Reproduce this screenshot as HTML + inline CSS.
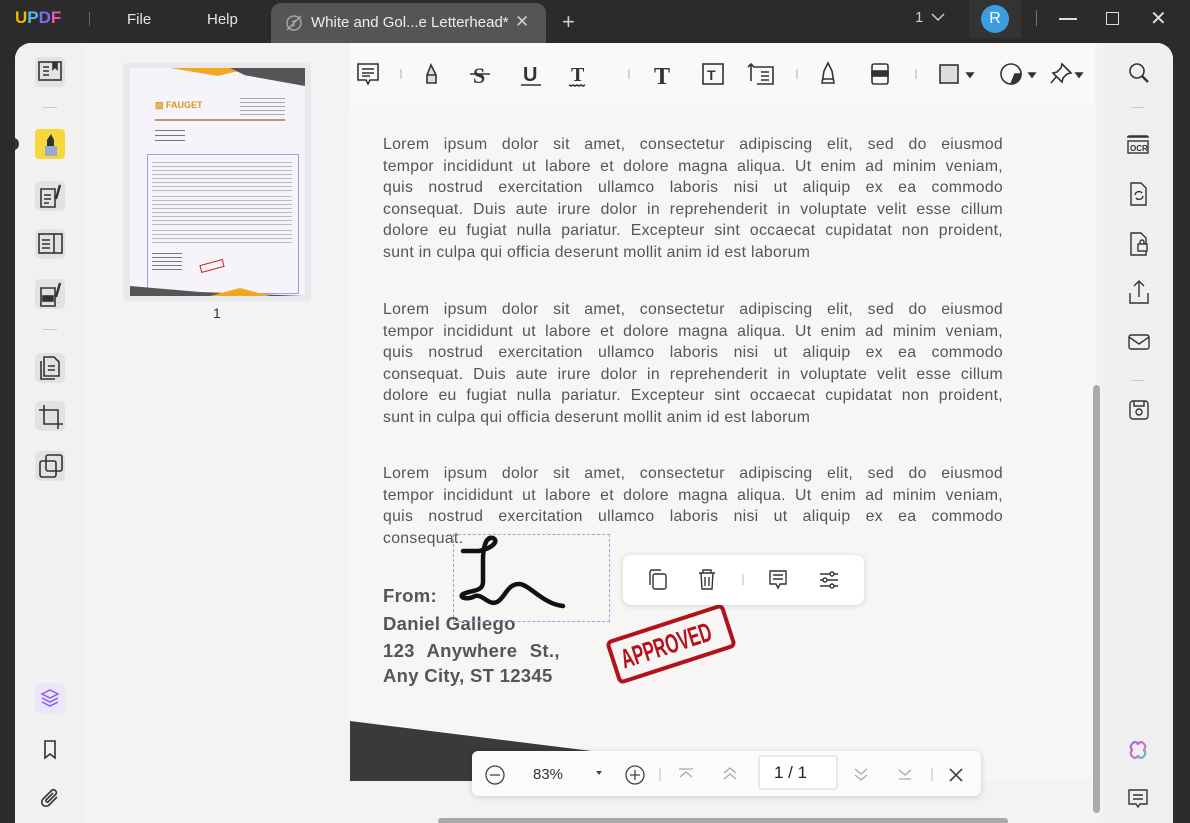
<!DOCTYPE html>
<html><head><meta charset="utf-8"><style>
*{margin:0;padding:0;box-sizing:border-box}
body{width:1190px;height:823px;overflow:hidden;background:#2b2b2b;font-family:"Liberation Sans",sans-serif;position:relative}
.a{position:absolute}
.t{color:#e6e6e6;font-size:15px}
.main{left:15px;top:43px;width:1158px;height:780px;background:#f3f3f3;border-radius:16px 16px 0 0;overflow:hidden}
.lb{left:0;top:0;width:70px;height:780px;background:#f1f1f1}
.ib{width:30px;height:30px;border-radius:5px;background:#e2e2e2;left:20px}
.doc{left:335px;top:0;width:745px;height:780px;background:#f7f6f4}
.tb{left:335px;top:0;width:745px;height:62px;background:#f9f9f9}
.p{position:absolute;left:368px;width:620px;font-size:15.8px;line-height:21.6px;color:#555;letter-spacing:0.3px}
.p div{text-align:justify;text-align-last:justify;height:21.6px;white-space:nowrap}
.p div.l{text-align-last:left}
.rb{left:1088px;top:0;width:70px;height:780px;background:#efefef}
svg{position:absolute}
.bold{position:absolute;left:368px;font-weight:bold;color:#555;font-size:18.5px;letter-spacing:0.3px}
</style></head><body>
<div class="a" style="left:15px;top:8px;font-weight:bold;font-size:17px"><span style="color:#f4b400">U</span><span style="color:#4bc0e0">P</span><span style="color:#7c6df2">D</span><span style="color:#e65aa5">F</span></div>
<div class="a" style="left:89px;top:12px;width:1px;height:14px;background:#666"></div>
<div class="a t" style="left:127px;top:11px">File</div>
<div class="a t" style="left:207px;top:11px">Help</div>
<div class="a" style="left:271px;top:3px;width:275px;height:42px;background:#555;border-radius:10px 10px 0 0"></div>
<svg style="left:284px;top:13px" width="20" height="20" viewBox="0 0 20 20" fill="none" stroke="#aaa" stroke-width="1.4"><circle cx="10" cy="10" r="7"/><path d="M3 17L17 3M7 13l4-1M8 9l5-2"/></svg>
<div class="a t" style="left:311px;top:14px;color:#eee">White and Gol...e Letterhead*</div>
<div class="a t" style="left:515px;top:12px;font-size:17px;color:#ccc">✕</div>
<div class="a t" style="left:562px;top:9px;font-size:22px;color:#ccc">+</div>
<div class="a t" style="left:915px;top:9px;color:#ccc">1</div>
<svg style="left:930px;top:12px" width="16" height="10"><path d="M2 2l6 6 6-6" stroke="#ccc" fill="none" stroke-width="1.5"/></svg>
<div class="a" style="left:969px;top:0;width:52px;height:38px;background:#333"></div>
<div class="a" style="left:981px;top:5px;width:28px;height:28px;border-radius:50%;background:#3c9ee0;color:#fff;font-size:16px;text-align:center;line-height:28px">R</div>
<div class="a" style="left:1036px;top:10px;width:1px;height:16px;background:#777"></div>
<div class="a" style="left:1059px;top:18px;width:18px;height:1.5px;background:#ddd"></div>
<div class="a" style="left:1106px;top:12px;width:13px;height:13px;border:1.5px solid #ddd"></div>
<div class="a t" style="left:1150px;top:6px;font-size:20px;color:#ddd">✕</div>

<div class="a main">
 <div class="a lb"></div>
 <div class="a ib" style="top:14px"></div>
 <svg style="left:23px;top:18px" width="24" height="22" fill="none" stroke="#333" stroke-width="1.6"><rect x="1" y="1" width="22" height="18"/><path d="M5 6h6M5 10h6M5 14h6"/><path d="M15 1v7l2-2 2 2V1" fill="#333"/></svg>
 <div class="a" style="left:28px;top:64px;width:14px;height:1px;background:#ccc"></div>
 <div class="a" style="left:-6px;top:95px;width:10px;height:12px;border-radius:50%;background:#333"></div>
 <div class="a" style="left:20px;top:86px;width:30px;height:30px;background:#f7d739;border-radius:4px"></div>
 <svg style="left:25px;top:89px" width="20" height="28"><path d="M7 8l4-6 3 6v6H7z" fill="#333"/><rect x="5" y="14" width="12" height="10" fill="#9ac" /></svg>
 <div class="a ib" style="top:138px"></div>
 <svg style="left:24px;top:140px" width="24" height="26" fill="none" stroke="#333" stroke-width="1.6"><path d="M2 6h14v18H2z M5 12h7M5 16h7M5 20h5"/><path d="M17 16l4-14" stroke-width="2.4"/></svg>
 <div class="a ib" style="top:186px"></div>
 <svg style="left:23px;top:190px" width="26" height="22" fill="none" stroke="#333" stroke-width="1.6"><rect x="1" y="1" width="23" height="19"/><path d="M16 1v19M4 7h8M4 11h8M4 15h8"/></svg>
 <div class="a ib" style="top:236px"></div>
 <svg style="left:24px;top:237px" width="24" height="28" fill="none" stroke="#333" stroke-width="1.6"><path d="M2 8h14v18H2z"/><rect x="4" y="16" width="10" height="5" fill="#333"/><path d="M17 17l4-14" stroke-width="2.4"/></svg>
 <div class="a" style="left:28px;top:286px;width:14px;height:1px;background:#ccc"></div>
 <div class="a ib" style="top:310px"></div>
 <svg style="left:24px;top:313px" width="24" height="26" fill="none" stroke="#333" stroke-width="1.6"><path d="M5 1h10l5 5v14H5z M2 5v18h14"/><path d="M9 10h7M9 14h7"/></svg>
 <div class="a ib" style="top:358px"></div>
 <svg style="left:22px;top:360px" width="28" height="28" fill="none" stroke="#333" stroke-width="1.6"><path d="M7 2v19h19M2 7h19v19"/></svg>
 <div class="a ib" style="top:408px"></div>
 <svg style="left:23px;top:410px" width="26" height="26" fill="none" stroke="#333" stroke-width="1.6"><rect x="8" y="2" width="16" height="16" rx="2"/><rect x="2" y="8" width="16" height="16" rx="2"/></svg>
 <div class="a" style="left:20px;top:640px;width:30px;height:30px;background:#ece6fb;border-radius:4px"></div>
 <svg style="left:25px;top:645px" width="20" height="20" fill="none" stroke="#8a5cf0" stroke-width="1.5"><path d="M10 2l8 4-8 4-8-4z M2 10l8 4 8-4M2 14l8 4 8-4"/></svg>
 <svg style="left:28px;top:697px" width="14" height="20" fill="none" stroke="#333" stroke-width="1.6"><path d="M2 1h10v17l-5-4-5 4z"/></svg>
 <svg style="left:25px;top:745px" width="22" height="22" fill="none" stroke="#333" stroke-width="1.6"><path d="M17 9l-8 8a4 4 0 01-6-6l9-9a3 3 0 014 4l-8 8a1.5 1.5 0 01-2-2l7-7"/></svg>

 <!-- thumbnail -->
 <div class="a" style="left:108px;top:20px;width:188px;height:238px;background:#e9e8ee;border-radius:3px"></div>
 <div class="a" style="left:115px;top:25px;width:175px;height:228px;background:#f6f4fa;overflow:hidden">
  <div class="a" style="left:40px;top:0;width:80px;height:8px;background:#f0a81c;clip-path:polygon(0 0,100% 0,60% 100%)"></div>
  <div class="a" style="left:100px;top:0;width:75px;height:18px;background:#555;clip-path:polygon(0 0,100% 0,100% 100%,20% 40%)"></div>
  <div class="a" style="left:25px;top:32px;color:#d79a1e;font-size:9px;font-weight:bold">▨ FAUGET</div>
  <div class="a" style="left:110px;top:30px;width:45px;height:18px;background:repeating-linear-gradient(#aaa 0 1px,transparent 1px 4px)"></div>
  <div class="a" style="left:25px;top:51px;width:130px;height:2px;background:#b39b6a"></div>
  <div class="a" style="left:25px;top:62px;width:30px;height:14px;background:repeating-linear-gradient(#777 0 1px,transparent 1px 5px)"></div>
  <div class="a" style="left:17px;top:86px;width:152px;height:140px;border:1px solid #a999e6"></div>
  <div class="a" style="left:22px;top:94px;width:140px;height:30px;background:repeating-linear-gradient(#bbb 0 1px,transparent 1px 4px)"></div>
  <div class="a" style="left:22px;top:128px;width:140px;height:30px;background:repeating-linear-gradient(#bbb 0 1px,transparent 1px 4px)"></div>
  <div class="a" style="left:22px;top:162px;width:140px;height:16px;background:repeating-linear-gradient(#bbb 0 1px,transparent 1px 4px)"></div>
  <div class="a" style="left:22px;top:185px;width:30px;height:20px;background:repeating-linear-gradient(#777 0 1px,transparent 1px 4px)"></div>
  <div class="a" style="left:70px;top:194px;width:24px;height:8px;border:1px solid #c22;transform:rotate(-15deg)"></div>
  <div class="a" style="left:0;top:218px;width:175px;height:10px;background:#555;clip-path:polygon(0 0,40% 60%,100% 100%,0 100%)"></div>
  <div class="a" style="left:80px;top:220px;width:60px;height:8px;background:#f0a81c;clip-path:polygon(50% 0,100% 100%,0 100%)"></div>
 </div>
 <div class="a" style="left:198px;top:262px;font-size:14px;color:#333">1</div>

 <!-- document -->
 <div class="a doc"></div>
 <div class="a tb"></div>
 <div class="a" style="left:335px;top:678px;width:290px;height:60px;background:#3a3a3a;clip-path:polygon(0 0,100% 60%,100% 100%,0 100%)"></div>
 <div class="a" style="left:335px;top:738px;width:745px;height:42px;background:#f3f3f3"></div>
 <div class="a" style="left:1078px;top:342px;width:7px;height:428px;background:#aaa;border-radius:4px"></div>
 <div class="a" style="left:423px;top:775px;width:570px;height:6px;background:#aaa;border-radius:3px"></div>
 <svg style="left:340px;top:18px" width="720" height="28" fill="none" stroke="#333" stroke-width="1.6">
  <path d="M3 3h20v16H15l-2 4-2-4H3z M7 8h12M7 12h12M7 15h8"/>
  <line x1="46" y1="8" x2="46" y2="18" stroke="#ccc"/>
  <path d="M72 22l0-8 4-10 5 10v8z M72 14h9" fill="#ddd"/>
  <text x="118" y="22" font-size="22" font-weight="bold" fill="#333" stroke="none" font-family="Liberation Serif">S</text><path d="M115 13h20"/>
  <text x="168" y="20" font-size="20" font-weight="bold" fill="#333" stroke="none" font-family="Liberation Sans">U</text><path d="M166 24h20"/>
  <text x="216" y="20" font-size="20" font-weight="bold" fill="#333" stroke="none" font-family="Liberation Serif">T</text><path d="M214 24l2 1 2-1 2 1 2-1 2 1 2-1 2 1 2-1"/>
  <line x1="274" y1="8" x2="274" y2="18" stroke="#ccc"/>
  <text x="299" y="23" font-size="24" font-weight="bold" fill="#333" stroke="none" font-family="Liberation Serif">T</text>
  <rect x="348" y="3" width="20" height="20"/><text x="352" y="19" font-size="14" font-weight="bold" fill="#333" stroke="none">T</text>
  <path d="M398 6h20v17h-16 M406 11h8M406 15h8M406 19h8M396 3v17M393 6l3-3 3 3"/>
  <line x1="442" y1="8" x2="442" y2="18" stroke="#ccc"/>
  <path d="M467 22l2-12 4-8 4 8 2 12z M467 18h12"/>
  <rect x="517" y="3" width="16" height="20" rx="2"/><rect x="517" y="10" width="16" height="5" fill="#333"/>
  <line x1="561" y1="8" x2="561" y2="18" stroke="#ccc"/>
  <rect x="585" y="4" width="18" height="18" fill="#ddd"/><path d="M612 12l6 0-3 4z" fill="#333"/>
  <circle cx="656" cy="13" r="10"/><path d="M656 23a10 10 0 0010-10h-6z" fill="#333"/><path d="M674 12l6 0-3 4z" fill="#333"/>
 </svg>
 <svg style="left:1035px;top:18px" width="40" height="28" fill="none" stroke="#333" stroke-width="1.6"><path d="M12 3l9 9-4 1-4 4-1 4-9-9 4-1 4-4z M6 16l-5 6"/><path d="M26 12l6 0-3 4z" fill="#333"/></svg>

 <div class="p" style="top:91px">
  <div>Lorem ipsum dolor sit amet, consectetur adipiscing elit, sed do eiusmod</div>
  <div>tempor incididunt ut labore et dolore magna aliqua. Ut enim ad minim veniam,</div>
  <div>quis nostrud exercitation ullamco laboris nisi ut aliquip ex ea commodo</div>
  <div>consequat. Duis aute irure dolor in reprehenderit in voluptate velit esse cillum</div>
  <div>dolore eu fugiat nulla pariatur. Excepteur sint occaecat cupidatat non proident,</div>
  <div class="l">sunt in culpa qui officia deserunt mollit anim id est laborum</div>
 </div>
 <div class="p" style="top:256px">
  <div>Lorem ipsum dolor sit amet, consectetur adipiscing elit, sed do eiusmod</div>
  <div>tempor incididunt ut labore et dolore magna aliqua. Ut enim ad minim veniam,</div>
  <div>quis nostrud exercitation ullamco laboris nisi ut aliquip ex ea commodo</div>
  <div>consequat. Duis aute irure dolor in reprehenderit in voluptate velit esse cillum</div>
  <div>dolore eu fugiat nulla pariatur. Excepteur sint occaecat cupidatat non proident,</div>
  <div class="l">sunt in culpa qui officia deserunt mollit anim id est laborum</div>
 </div>
 <div class="p" style="top:420px">
  <div>Lorem ipsum dolor sit amet, consectetur adipiscing elit, sed do eiusmod</div>
  <div>tempor incididunt ut labore et dolore magna aliqua. Ut enim ad minim veniam,</div>
  <div>quis nostrud exercitation ullamco laboris nisi ut aliquip ex ea commodo</div>
  <div class="l">consequat.</div>
 </div>
 <div class="bold" style="top:542px">From:</div>
 <div class="bold" style="top:570px">Daniel Gallego</div>
 <div class="bold" style="top:597px;word-spacing:7px">123 Anywhere St.,</div>
 <div class="bold" style="top:622px">Any City, ST 12345</div>
 <div class="a" style="left:438px;top:491px;width:157px;height:88px;border:1px dashed #a99be0"></div>
 <svg style="left:438px;top:491px" width="160" height="90" fill="none" stroke="#111" stroke-width="4.5" stroke-linecap="round"><path d="M10 17h16c14-3 20-10 14-13-8-2-10 12-10 22v22c0 10-12 8-20 12-5 4 5 6 12 2 8-2 14 10 22 6 8-4 10-18 22-18 10 0 24 20 44 22"/></svg>
 <div class="a" style="left:594px;top:578px;width:124px;height:46px;border:4px solid #b3121c;border-radius:6px;transform:rotate(-18deg);overflow:hidden"><div style="color:#b3121c;font-weight:bold;font-size:27px;line-height:38px;width:160px;transform:scaleX(0.62);transform-origin:0 0;margin-left:6px">APPROVED</div></div>
 <div class="a" style="left:608px;top:512px;width:241px;height:50px;background:#fff;border-radius:8px;box-shadow:0 1px 6px rgba(0,0,0,.15)"></div>
 <svg style="left:608px;top:512px" width="241" height="50" fill="none" stroke="#333" stroke-width="1.4"><rect x="30" y="19" width="13" height="15" rx="2"/><path d="M27 30V17a2 2 0 012-2h9"/><path d="M76 18h16M80 18v-3h8v3M78 18l1 16h10l1-16M82 22v9M86 22v9"/><line x1="120" y1="19" x2="120" y2="30" stroke="#ccc"/><path d="M147 16h16v13h-6l-2 4-2-4h-6z M150 20h10M150 24h10"/><path d="M197 19h18M197 25h18M197 31h18"/><circle cx="209" cy="19" r="2" fill="#fff"/><circle cx="202" cy="25" r="2" fill="#fff"/><circle cx="209" cy="31" r="2" fill="#fff"/></svg>
 <div class="a" style="left:457px;top:708px;width:509px;height:45px;background:#fbfbfb;border-radius:6px;box-shadow:0 1px 6px rgba(0,0,0,.18)"></div>
 <svg style="left:457px;top:708px" width="509" height="45" fill="none" stroke="#444" stroke-width="1.3"><circle cx="23" cy="24" r="9"/><path d="M18 24h10"/><circle cx="163" cy="24" r="9"/><path d="M158 24h10M163 19v10"/><path d="M124 20l6 0-3 4z" fill="#444" stroke="none"/><line x1="188" y1="17" x2="188" y2="30" stroke="#ccc"/><path d="M207 18h14M208 26l6-5 6 5" stroke="#aaa"/><path d="M252 22l6-5 6 5M252 28l6-5 6 5" stroke="#aaa"/><rect x="287" y="5" width="78" height="33" rx="3" fill="#fff" stroke="#ddd"/><path d="M383 18l6 5 6-5M383 24l6 5 6-5" stroke="#aaa"/><path d="M427 19l6 5 6-5M427 28h12" stroke="#aaa"/><line x1="460" y1="17" x2="460" y2="30" stroke="#ccc"/><path d="M478 18l12 12M490 18l-12 12" stroke-width="1.6"/></svg>
 <div class="a" style="left:518px;top:723px;font-size:15px;color:#333">83%</div>
 <div class="a" style="left:759px;top:720px;font-size:17px;color:#222">1 / 1</div>

 <div class="a rb"></div>
 <svg style="left:1112px;top:18px" width="24" height="24" fill="none" stroke="#333" stroke-width="1.6"><circle cx="10" cy="10" r="7"/><path d="M15 15l6 6" stroke-width="2.4"/></svg>
 <div class="a" style="left:1116px;top:64px;width:14px;height:1px;background:#ccc"></div>
 <svg style="left:1110px;top:90px" width="26" height="300" fill="none" stroke="#333" stroke-width="1.4">
  <path d="M2 4h22M4 4v-1h18v1"/><rect x="3" y="8" width="20" height="12"/><text x="5" y="18" font-size="8" fill="#333" stroke="none" font-weight="bold">OCR</text>
  <path d="M6 50h10l5 5v17H6z"/><path d="M10 62a4 4 0 017-2M18 63a4 4 0 01-7 2"/>
  <path d="M6 100h10l5 5v17H6z"/><rect x="13" y="111" width="9" height="7" fill="#f1f1f1"/><path d="M15 111v-2a2 2 0 014 0v2"/>
  <path d="M5 160v10h18v-10M14 164V148M9 153l5-5 5 5"/>
  <rect x="4" y="202" width="20" height="14" rx="2"/><path d="M4 204l10 7 10-7"/>
  <rect x="5" y="268" width="18" height="18" rx="3"/><circle cx="14" cy="279" r="3"/><path d="M9 268v5h10v-5"/>
 </svg>
 <div class="a" style="left:1116px;top:337px;width:14px;height:1px;background:#ccc"></div>
 <svg style="left:1111px;top:695px" width="24" height="24" fill="none" stroke-width="2.2"><path d="M6 6c3-4 6-1 6 1 0-2 3-5 6-1 3 3 0 6-1 6 1 0 4 3 1 6-3 4-6 1-6-1 0 2-3 5-6 1-3-3 0-6 1-6-1 0-4-3-1-6z" stroke="url(#g)"/><defs><linearGradient id="g" x1="0" y1="0" x2="1" y2="1"><stop offset="0" stop-color="#a36af5"/><stop offset=".5" stop-color="#e06ab0"/><stop offset="1" stop-color="#4dc0e0"/></linearGradient></defs></svg>
 <svg style="left:1112px;top:745px" width="22" height="22" fill="none" stroke="#333" stroke-width="1.4"><path d="M2 2h18v14h-7l-2 3-2-3H2z M6 7h10M6 11h10"/></svg>
</div>
</body></html>
